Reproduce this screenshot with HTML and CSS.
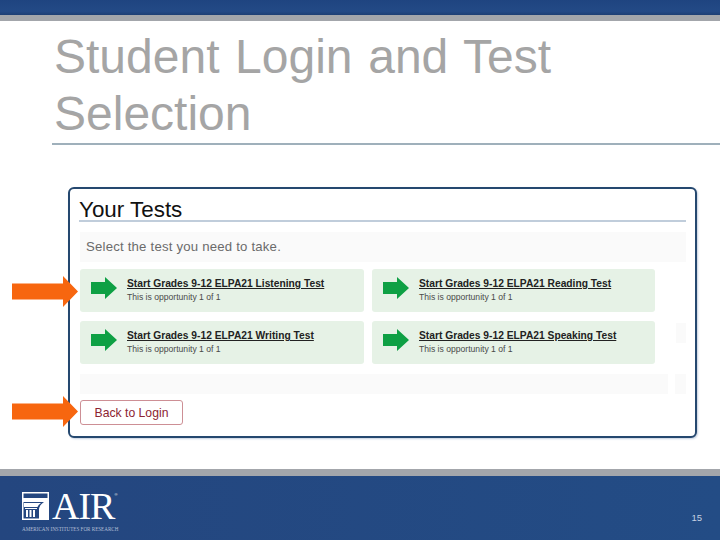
FILE: index.html
```html
<!DOCTYPE html>
<html lang="en">
<head>
<meta charset="utf-8">
<title>Student Login and Test Selection</title>
<link rel="stylesheet" href="styles.css">
</head>
<body>
<div class="slide">
  <div class="top-bar"></div>
  <div class="top-rule"></div>
  <header class="title-block">
    <h1 class="title">Student Login and Test<br>Selection</h1>
  </header>
  <main class="content">
    <svg class="callout callout-tests" viewBox="0 0 66 31" aria-hidden="true"><path d="M0 7.500H51V0L66 15.500 51 31V23.500H0Z"/></svg>
    <svg class="callout callout-back" viewBox="0 0 66 31" aria-hidden="true"><path d="M0 7.500H51V0L66 15.500 51 31V23.500H0Z"/></svg>
    <section class="panel">
      <h2 class="panel-title">Your Tests</h2>
      <p class="prompt">Select the test you need to take.</p>
      <div class="row">
        <div class="test-grid">
          <a class="test-card">
            <svg class="go" viewBox="0 0 26 22" aria-hidden="true"><path d="M0 5H14V0L26 11 14 22V17H0Z"/></svg>
            <span class="test-text"><span class="test-name">Start Grades 9-12 ELPA21 Listening Test</span><span class="test-note">This is opportunity 1 of 1</span></span>
          </a>
          <a class="test-card">
            <svg class="go" viewBox="0 0 26 22" aria-hidden="true"><path d="M0 5H14V0L26 11 14 22V17H0Z"/></svg>
            <span class="test-text"><span class="test-name">Start Grades 9-12 ELPA21 Reading Test</span><span class="test-note">This is opportunity 1 of 1</span></span>
          </a>
          <a class="test-card">
            <svg class="go" viewBox="0 0 26 22" aria-hidden="true"><path d="M0 5H14V0L26 11 14 22V17H0Z"/></svg>
            <span class="test-text"><span class="test-name">Start Grades 9-12 ELPA21 Writing Test</span><span class="test-note">This is opportunity 1 of 1</span></span>
          </a>
          <a class="test-card">
            <svg class="go" viewBox="0 0 26 22" aria-hidden="true"><path d="M0 5H14V0L26 11 14 22V17H0Z"/></svg>
            <span class="test-text"><span class="test-name">Start Grades 9-12 ELPA21 Speaking Test</span><span class="test-note">This is opportunity 1 of 1</span></span>
          </a>
        </div>
        <div class="side-stub side-stub-cards"></div>
      </div>
      <div class="row row-blank">
        <div class="blank-band"></div>
        <div class="side-stub"></div>
      </div>
      <button class="back-button" type="button">Back to Login</button>
    </section>
  </main>
  <div class="bottom-rule"></div>
  <footer class="footer">
    <div class="logo">
      <div class="logo-main">
        <svg class="logo-mark" viewBox="0 0 27 28" aria-hidden="true">
          <path fill="#fff" fill-rule="evenodd" d="M0 0H27V28H0ZM1.500 1.500V6H25.500V1.500ZM1.500 7V26.500H17V18Q17 13 22 10H1.500Z"/>
          <path fill="#fff" d="M2 11H19Q16 13 15.500 15H2ZM3 16H15V17H3ZM4 18H6V25H4ZM7.500 18H9.500V25H7.500ZM11 18H13V25H11Z"/>
        </svg>
        <span class="logo-word">AIR</span>
        <span class="logo-reg">®</span>
      </div>
      <div class="logo-tag">AMERICAN INSTITUTES FOR RESEARCH</div>
    </div>
    <span class="page-number">15</span>
  </footer>
</div>
</body>
</html>
```
FILE: styles.css
```css
* { box-sizing: border-box; }
html, body { margin: 0; padding: 0; background: #fff; }
.slide {
  width: 720px;
  height: 540px;
  display: flex;
  flex-direction: column;
  overflow: hidden;
  font-family: "Liberation Sans", Arial, sans-serif;
}
.top-bar {
  height: 15px;
  background: linear-gradient(180deg, #1f4480 0%, #234a86 75%, #1d3f74 100%);
}
.top-rule { height: 6px; background: #a3a6ab; }
.title-block {
  height: 124px;
  margin-left: 52px;
  padding: 7px 0 0 2px;
  border-bottom: 2px solid #9fb0bb;
}
.title {
  margin: 0;
  font-size: 48px;
  font-weight: 400;
  line-height: 57px;
  word-spacing: 2.300px;
  color: #a5a5a5;
}
.content {
  position: relative;
  height: 324px;
  padding: 42px 0 0 68px;
}
.callout {
  position: absolute;
  left: 12px;
  width: 66px;
  height: 31px;
  z-index: 1;
  fill: #f7660f;
}
.callout-tests { top: 131px; }
.callout-back { top: 251px; }
.panel {
  width: 629px;
  height: 251px;
  padding: 8px 9px 0 9px;
  background: #fff;
  border: 2px solid #25486f;
  border-radius: 6px;
  box-shadow: 1px 1px 2px #c5d0e0;
}
.panel-title {
  margin: 0;
  height: 25px;
  font-size: 22.400px;
  line-height: 26px;
  font-weight: 400;
  color: #111;
  border-bottom: 2px solid #c0cddb;
}
.prompt {
  margin: 10px 0 7px 1px;
  height: 30px;
  padding-left: 6px;
  background: #fafafa;
  font-size: 13.200px;
  line-height: 30px;
  letter-spacing: 0.2px;
  color: #6b6b6b;
}
.row { display: flex; margin-left: 1px; }
.test-grid {
  width: 575px;
  display: grid;
  grid-template-columns: 284px 283px;
  grid-auto-rows: 43px;
  gap: 9px 8px;
}
.test-card {
  display: flex;
  align-items: flex-start;
  gap: 10px;
  padding: 8px 0 0 11px;
  background: #e6f2e6;
  border-radius: 3px;
}
.go { width: 26px; height: 22px; flex: none; fill: #0ea044; }
.test-text { display: flex; flex-direction: column; }
.test-name {
  font-size: 10.250px;
  line-height: 13px;
  font-weight: 700;
  color: #222;
  text-decoration: underline;
  white-space: nowrap;
}
.test-note {
  margin-top: 1px;
  font-size: 8.600px;
  line-height: 12px;
  color: #4a4a4a;
}
.side-stub {
  width: 11px;
  height: 20px;
  margin-left: 7px;
  background: #fafafa;
}
.side-stub-cards { margin: 54px 0 0 21px; }
.row-blank { margin-top: 10px; }
.blank-band { width: 589px; height: 20px; background: #fafafa; }
.back-button {
  display: block;
  width: 103px;
  height: 25px;
  margin: 6px 0 0 1px;
  padding: 0;
  background: #fff;
  border: 1px solid #cd8f95;
  border-radius: 3px;
  font-family: inherit;
  font-size: 12.200px;
  color: #8c2432;
}
.bottom-rule { height: 7px; background: #a3a6ab; }
.footer {
  flex: 1;
  display: flex;
  justify-content: space-between;
  align-items: flex-start;
  padding: 16px 18px 0 22px;
  background: linear-gradient(90deg, #24467f 0%, #234c85 100%);
}
.logo { width: 100px; color: #fff; }
.logo-main { display: flex; align-items: flex-start; height: 29px; }
.logo-mark { width: 27px; height: 28px; flex: none; }
.logo-word {
  margin-left: 3px;
  font-family: "Liberation Serif", serif;
  font-size: 38px;
  line-height: 29px;
  letter-spacing: -1px;
}
.logo-reg { font-size: 4px; line-height: 6px; }
.logo-tag {
  margin-top: 5px;
  font-family: "Liberation Serif", serif;
  font-size: 5.100px;
  line-height: 7px;
  white-space: nowrap;
  color: #b3bfd6;
}
.page-number {
  margin-top: 20px;
  font-size: 9.500px;
  line-height: 12px;
  color: #c4d0e2;
}
```
